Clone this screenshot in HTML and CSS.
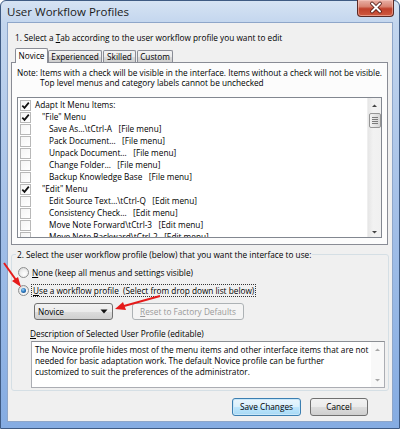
FILE: index.html
```html
<!DOCTYPE html>
<html>
<head>
<meta charset="utf-8">
<title>User Workflow Profiles</title>
<link rel="stylesheet" href="styles.css">
</head>
<body>
<div class="window">
  <div class="titlebar">
    <span class="title">User Workflow Profiles</span>
    <div class="close">
      <svg width="36" height="17" viewBox="0 0 36 17">
        <path d="M14 4.5 L22 12.5 M22 4.5 L14 12.5" stroke="#4a1510" stroke-width="3.6" stroke-linecap="round"/>
        <path d="M14 4.5 L22 12.5 M22 4.5 L14 12.5" stroke="#ffffff" stroke-width="2" stroke-linecap="round"/>
      </svg>
    </div>
  </div>
  <div class="client">
    <div class="step1">1. Select a <u>T</u>ab according to the user workflow profile you want to edit</div>
    <div class="tabs">
      <div class="tab sel">Novice</div>
      <div class="tab w-exp">Experienced</div>
      <div class="tab w-skl">Skilled</div>
      <div class="tab w-cus">Custom</div>
    </div>
    <div class="panel">
      <div class="note">
        <span class="note-label">Note:</span>
        <span class="note-text">Items with a check will be visible in the interface. Items without a check will not be visible.<br>Top level menus and category labels cannot be unchecked</span>
      </div>
      <div class="list">
        <div class="rows">
          <div class="row"><span class="cb on"><svg width="9" height="9" viewBox="0 0 9 9"><path d="M1.3 4.6 L3.5 6.9 L7.8 1.6" fill="none" stroke="#111" stroke-width="1.7"/></svg></span><span class="lbl l0">Adapt It Menu Items:</span></div>
          <div class="row"><span class="cb on"><svg width="9" height="9" viewBox="0 0 9 9"><path d="M1.3 4.6 L3.5 6.9 L7.8 1.6" fill="none" stroke="#111" stroke-width="1.7"/></svg></span><span class="lbl l1">"File" Menu</span></div>
          <div class="row"><span class="cb"></span><span class="lbl l2">Save As…\tCtrl-A   [File menu]</span></div>
          <div class="row"><span class="cb"></span><span class="lbl l2">Pack Document…   [File menu]</span></div>
          <div class="row"><span class="cb"></span><span class="lbl l2">Unpack Document…   [File menu]</span></div>
          <div class="row"><span class="cb"></span><span class="lbl l2">Change Folder…   [File menu]</span></div>
          <div class="row"><span class="cb"></span><span class="lbl l2">Backup Knowledge Base   [File menu]</span></div>
          <div class="row"><span class="cb on"><svg width="9" height="9" viewBox="0 0 9 9"><path d="M1.3 4.6 L3.5 6.9 L7.8 1.6" fill="none" stroke="#111" stroke-width="1.7"/></svg></span><span class="lbl l1">"Edit" Menu</span></div>
          <div class="row"><span class="cb"></span><span class="lbl l2">Edit Source Text…\tCtrl-Q   [Edit menu]</span></div>
          <div class="row"><span class="cb"></span><span class="lbl l2">Consistency Check…   [Edit menu]</span></div>
          <div class="row"><span class="cb"></span><span class="lbl l2">Move Note Forward\tCtrl-3   [Edit menu]</span></div>
          <div class="row"><span class="cb"></span><span class="lbl l2">Move Note Backward\tCtrl-2   [Edit menu]</span></div>
        </div>
        <div class="vscroll">
          <svg class="arr" width="13" height="10" viewBox="0 0 13 10"><path d="M4 6 L9 6 L6.5 3.5 Z" fill="#444"/></svg>
          <div class="thumb"><span></span><span></span><span></span><span></span></div>
          <div class="track"></div>
          <svg class="arr" width="13" height="10" viewBox="0 0 13 10"><path d="M4 4 L9 4 L6.5 6.5 Z" fill="#444"/></svg>
        </div>
      </div>
    </div>

    <div class="group">
      <div class="group-label">2. Select the user workflow profile (below) that you want the interface to use:</div>
      <div class="radio-row r1"><span class="radio"></span><span class="rlabel"><u>N</u>one (keep all menus and settings visible)</span></div>
      <div class="radio-row r2"><span class="radio on"><span class="dot"></span></span><span class="rlabel focus"><u>U</u>se a workflow profile  (Select from drop down list below)</span></div>
      <div class="combo-row">
        <div class="combo"><span>Novice</span><svg width="8" height="5" viewBox="0 0 8 5"><path d="M0.5 0.5 L7.5 0.5 L4 4.5 Z" fill="#111"/></svg></div>
        <div class="btn disabled reset"><u>R</u>eset to Factory Defaults</div>
      </div>
      <div class="desc-label"><u>D</u>escription of Selected User Profile (editable)</div>
      <div class="textbox">
        <div class="tb-text">The Novice profile hides most of the menu items and other interface items that are not<br>needed for basic adaptation work. The default Novice profile can be further<br>customized to suit the preferences of the administrator.</div>
        <div class="tb-scroll">
          <svg width="13" height="10" viewBox="0 0 13 10"><path d="M4 6 L9 6 L6.5 3.5 Z" fill="#a8a8a8"/></svg>
          <svg width="13" height="10" viewBox="0 0 13 10"><path d="M4 4 L9 4 L6.5 6.5 Z" fill="#a8a8a8"/></svg>
        </div>
      </div>
    </div>

    <div class="buttons">
      <div class="btn default">Save Changes</div>
      <div class="btn cancel">Cancel</div>
    </div>
  </div>

  <svg class="arrows" width="400" height="429" viewBox="0 0 400 429">
    <line x1="4" y1="263" x2="16" y2="280" stroke="#e51a1a" stroke-width="2"/>
    <path d="M21 287 L12 281 L18 277 Z" fill="#e51a1a"/>
    <line x1="160" y1="296" x2="124" y2="306" stroke="#e51a1a" stroke-width="2"/>
    <path d="M115 309 L123 302 L126 310 Z" fill="#e51a1a"/>
  </svg>
</div>
</body>
</html>
```

FILE: styles.css
```css
* { box-sizing: border-box; }
html, body { margin: 0; padding: 0; }
body {
  width: 400px;
  height: 429px;
  overflow: hidden;
  font-family: "Open Sans", "Noto Sans", sans-serif;
  font-size: 8.25px;
  line-height: 12px;
  color: #000;
  background: #ffffff;
}
u { text-decoration: underline; text-underline-offset: 1px; }

.window {
  position: relative;
  width: 400px;
  height: 429px;
  border: 1px solid #3f5b83;
  border-radius: 6px 6px 0 0;
  background: linear-gradient(180deg, #d6e3f3 0px, #c3d6ee 22px, #a7c2e8 45%, #85ace2 100%);
  padding: 0 6px 6px;
  display: flex;
  flex-direction: column;
}

.titlebar {
  height: 21px;
  display: flex;
  justify-content: space-between;
  align-items: flex-start;
}
.title {
  font-size: 11.5px;
  padding-top: 4px;
  line-height: 14px;
  color: #1a1a1a;
}
.close {
  width: 37px;
  height: 17px;
  margin-top: -1px;
  margin-right: -1px;
  border: 1px solid #5b2a25;
  border-top: none;
  border-radius: 0 0 4px 4px;
  background: linear-gradient(180deg, #e8b0a6 0%, #d98574 40%, #c0412c 55%, #cf5a40 100%);
  box-shadow: inset 0 0 0 1px rgba(255, 210, 200, 0.5);
}
.close svg { display: block; margin-top: -1px; }

.client {
  flex: 1;
  background: #f0f0f0;
  border: 1px solid #8ea6c9;
  display: flex;
  flex-direction: column;
}

.step1 {
  margin: 9px 0 0 7px;
  line-height: 12px;
}

.tabs {
  display: flex;
  align-items: flex-end;
  height: 15px;
  margin: 4px 0 -1px 7px;
  position: relative;
  z-index: 1;
}
.tab {
  height: 12px;
  margin-bottom: 1px;
  border: 1px solid #898c95;
  border-bottom: none;
  border-radius: 2px 2px 0 0;
  background: linear-gradient(180deg, #f3f3f3 0%, #ebebeb 50%, #dcdcdc 51%, #cfcfcf 100%);
  text-align: center;
  line-height: 11px;
}
.tab.sel {
  width: 33px;
  height: 15px;
  margin-bottom: 0;
  background: #fcfcfc;
  line-height: 11px;
  padding-top: 1px;
}
.tab.w-exp { width: 54px; }
.tab.w-skl { width: 33px; margin-left: 1px; }
.tab.w-cus { width: 36px; margin-left: 1px; }

.panel {
  margin: 0 4px 0 3px;
  border: 1px solid #898c95;
  background: #fcfcfc;
  padding: 5px 5px 6px 5px;
}
.note {
  display: flex;
  line-height: 10px;
}
.note-label { width: 23px; flex: none; }
.note-text { white-space: nowrap; }

.list {
  margin-top: 9px;
  height: 141px;
  border: 1px solid #828790;
  background: #fff;
  display: flex;
  overflow: hidden;
}
.rows {
  flex: 1;
  padding: 1px 0 0 2px;
  overflow: hidden;
}
.row {
  height: 12px;
  display: flex;
  align-items: center;
}
.cb {
  width: 11px;
  height: 11px;
  flex: none;
  border: 1px solid #b8b8b8;
  background: linear-gradient(135deg, #f4f4f4, #ffffff);
  display: flex;
  align-items: center;
  justify-content: center;
}
.cb svg { display: block; }
.lbl { white-space: pre; line-height: 12px; }
.l0 { margin-left: 4px; }
.l1 { margin-left: 11px; }
.l2 { margin-left: 18px; }

.vscroll {
  width: 14px;
  flex: none;
  background: linear-gradient(90deg, #e6e6e6, #f2f2f2 40%, #f0f0f0);
  border-left: 1px solid #efefef;
  display: flex;
  flex-direction: column;
  align-items: center;
  padding-top: 3px;
}
.vscroll .arr { display: block; flex: none; }
.thumb {
  width: 12px;
  height: 15px;
  margin-top: 2px;
  border: 1px solid #959595;
  border-radius: 2px;
  background: linear-gradient(90deg, #f2f2f2, #e4e4e4 50%, #d6d6d6);
  display: flex;
  flex-direction: column;
  align-items: center;
  justify-content: center;
  gap: 1px;
}
.thumb span {
  display: block;
  width: 6px;
  height: 1px;
  background: #7a7a7a;
}
.track { flex: 1; }

.group {
  margin: 9px 3px 0 3px;
  border: 1px solid #d5dfe5;
  border-radius: 3px;
  padding: 0 0 2px 0;
}
.group-label {
  margin: -6px 0 0 4px;
  padding: 0 1px;
  width: fit-content;
  background: #f0f0f0;
  line-height: 12px;
}
.radio-row {
  display: flex;
  align-items: center;
  height: 13px;
  padding-left: 6px;
  margin-top: 5px;
}
.radio {
  width: 11px;
  height: 11px;
  flex: none;
  border: 1px solid #8e8f8f;
  border-radius: 50%;
  background: radial-gradient(circle at 60% 65%, #ffffff 0%, #f0f0f0 45%, #d0d0d0 100%);
  display: flex;
  align-items: center;
  justify-content: center;
}
.radio .dot {
  width: 5px;
  height: 5px;
  border-radius: 50%;
  background: radial-gradient(circle at 40% 35%, #9fd4f6 0%, #2f7dc4 45%, #0d3b72 100%);
}
.rlabel { margin-left: 2px; padding: 0 1px; white-space: pre; }
.rlabel.focus { border: 1px dotted #333; line-height: 11px; }

.combo-row {
  display: flex;
  margin: 6px 0 0 22px;
}
.combo {
  width: 79px;
  height: 17px;
  border: 1px solid #707070;
  border-radius: 3px;
  background: linear-gradient(180deg, #f2f2f2 0%, #ebebeb 50%, #dddddd 51%, #cfcfcf 100%);
  display: flex;
  align-items: center;
  justify-content: space-between;
  padding: 0 4px 0 3px;
}
.combo svg { display: block; }

.btn {
  height: 18px;
  border: 1px solid #707070;
  border-radius: 3px;
  background: linear-gradient(180deg, #f2f2f2 0%, #ebebeb 50%, #dddddd 51%, #cfcfcf 100%);
  display: flex;
  align-items: center;
  justify-content: center;
  white-space: nowrap;
}
.btn.disabled {
  border-color: #adb2b5;
  background: #f4f4f4;
  color: #9a9a9a;
}
.reset { width: 112px; height: 17px; margin-left: 19px; }

.desc-label {
  margin: 8px 0 0 18px;
  line-height: 12px;
}
.textbox {
  margin: 1px 3px 0 19px;
  height: 47px;
  border: 1px solid #abadb3;
  border-top-color: #8c8f94;
  background: #fff;
  display: flex;
}
.tb-text {
  flex: 1;
  padding: 2px 0 0 3px;
  line-height: 11px;
  white-space: nowrap;
  overflow: hidden;
}
.tb-scroll {
  width: 13px;
  flex: none;
  display: flex;
  flex-direction: column;
  justify-content: space-between;
  padding: 3px 0 2px;
  background: #f8f8f8;
}
.tb-scroll svg { display: block; }

.buttons {
  display: flex;
  justify-content: flex-end;
  gap: 9px;
  margin-top: 7px;
  padding-right: 24px;
}
.btn.default {
  width: 69px;
  border-color: #3c7fb1;
  background: linear-gradient(180deg, #eaf6fd 0%, #d9f0fc 50%, #bee6fd 51%, #a7d9f5 100%);
  box-shadow: inset 0 0 0 1px #c8e7f9;
}
.btn.cancel { width: 58px; }

.arrows {
  position: absolute;
  left: -1px;
  top: -1px;
  pointer-events: none;
}
```
